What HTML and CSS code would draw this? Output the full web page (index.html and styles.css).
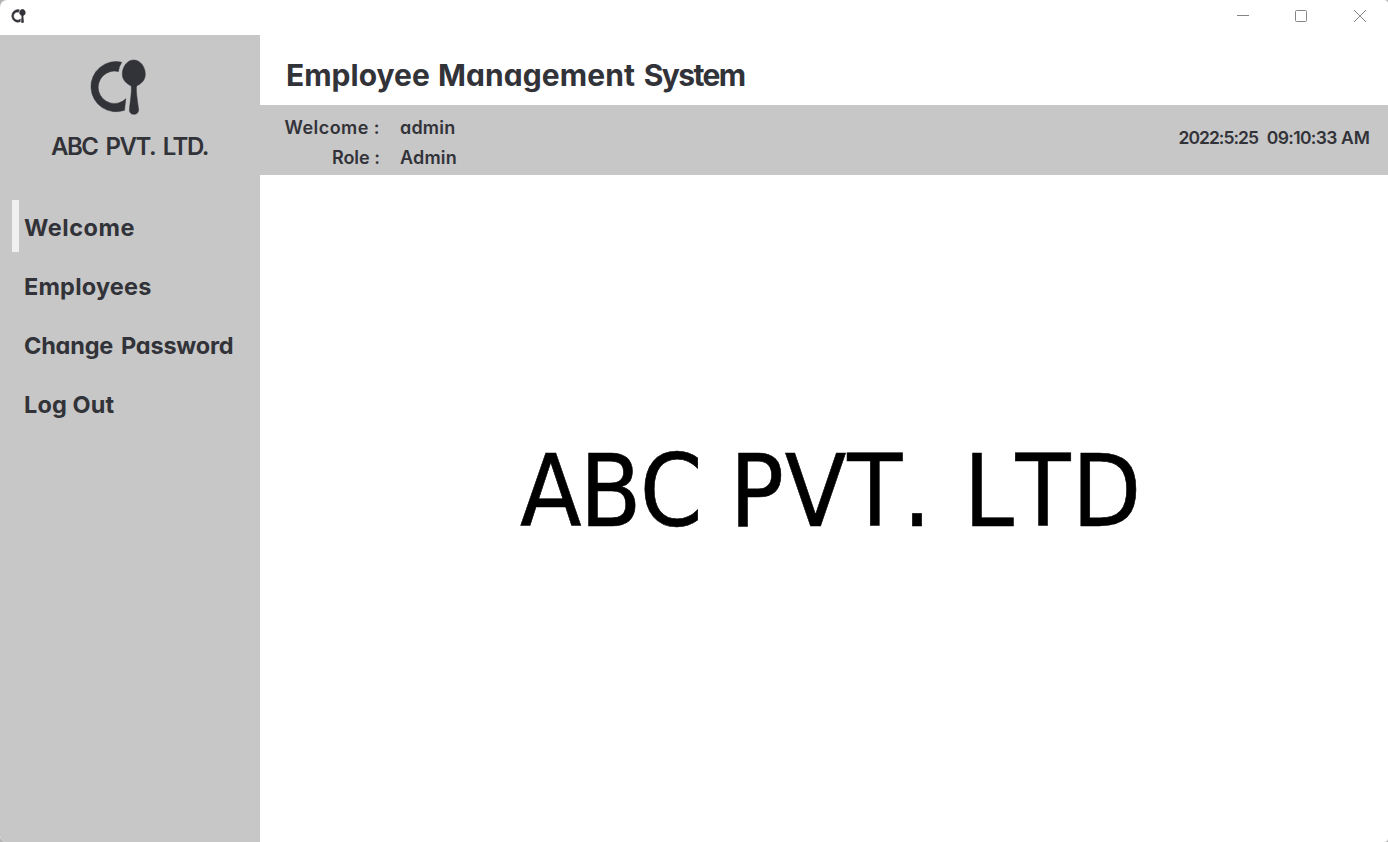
FILE: index.html
```html
<!DOCTYPE html>
<html lang="en">
<head>
<meta charset="utf-8">
<title>Employee Management System</title>
<link rel="stylesheet" href="styles.css">
</head>
<body>
<svg class="symbols" aria-hidden="true">
  <symbol id="logo" viewBox="0 0 56 56">
    <path d="M31.7 3.2A25.1 25.1 0 1 0 34.5 51.3L35.8 39.8A16.2 16.2 0 1 1 28.4 12.6Q29 7.4 31.7 3.2Z"/>
    <path d="M43.7 1C37.7 1 32.3 7.2 32.3 15.3C32.3 21 36.7 24.8 41.2 26.9C42 31 40.2 43 39.5 49.5C39 53.5 41 55.3 43.9 55.3C46.8 55.3 49 53.5 48.5 49.5C47.6 43 45.7 31 46.6 26.9C51.5 24.8 55.3 21 55.3 15.3C55.3 7.2 49.8 1 43.7 1Z"/>
  </symbol>
</svg>
<div class="window">
  <header class="titlebar">
    <svg class="app-icon"><use href="#logo"/></svg>
    <div class="controls">
      <svg class="control" viewBox="0 0 14 14"><path d="M1 6.5H13"/></svg>
      <svg class="control" viewBox="0 0 14 14"><rect x="1.5" y="1.5" width="11" height="11" rx="1"/></svg>
      <svg class="control" viewBox="0 0 14 14"><path d="M1 1L13 13M13 1L1 13"/></svg>
    </div>
  </header>
  <div class="layout">
    <aside class="sidebar">
      <svg class="logo"><use href="#logo"/></svg>
      <div class="company">ABC PVT. LTD.</div>
      <nav class="menu">
        <a class="item active"><span class="welcome">Welcome</span></a>
        <a class="item"><span class="employees">Employees</span></a>
        <a class="item"><span class="password">Change Password</span></a>
        <a class="item"><span class="logout">Log Out</span></a>
      </nav>
    </aside>
    <main class="main">
      <h1 class="heading"><span class="first">Employee</span> <span class="second">Management</span> <span class="third">System</span></h1>
      <section class="info">
        <dl class="user">
          <dt class="wide">Welcome :</dt><dd>admin</dd>
          <dt>Role :</dt><dd>Admin</dd>
        </dl>
        <div class="clock"><span class="date">2022:5:25</span>&nbsp; <span class="time">09:10:33</span> AM</div>
      </section>
      <section class="content"><div class="banner"><span class="abc">ABC</span> <span class="pvt">PVT.</span> <span class="ltd">LTD</span></div></section>
    </main>
  </div>
</div>
</body>
</html>
```
FILE: styles.css
```css
* { box-sizing: border-box; }
body { margin: 0; background: #b4b4b4; color: #323339; font-family: Inter, "Liberation Sans", sans-serif; font-weight: 650; font-feature-settings: "cv11", "calt" 0; }
.symbols { position: absolute; width: 0; height: 0; }
.window { width: 1388px; height: 842px; display: flex; flex-direction: column; background: #fff; border-radius: 7px 4px 4px 6px; overflow: hidden; }
.titlebar { height: 35px; flex: none; display: flex; justify-content: space-between; padding: 9px 21px 0 11px; }
.app-icon { width: 15px; height: 14px; fill: #323339; stroke: #323339; stroke-width: 2; }
.controls { display: grid; grid-template-columns: 58px 59px 14px; }
.control { width: 14px; height: 14px; fill: none; stroke: #858585; stroke-width: 1; }
.layout { flex: 1; display: flex; }
.sidebar { width: 260px; flex: none; background: #c7c7c7; display: flex; flex-direction: column; }
.logo { width: 56px; height: 56px; margin: 24px 0 0 90px; fill: #323339; stroke: #323339; stroke-width: .5; }
.company { height: 30px; line-height: 30px; margin: 17px 0 0 51px; font-size: 24px; font-weight: 600; letter-spacing: -1.5px; word-spacing: 3.5px; white-space: nowrap; }
.menu { display: flex; flex-direction: column; gap: 7px; margin-top: 38px; padding-left: 12px; }
.item { height: 52px; display: flex; align-items: center; padding: 2px 0 0 5px; border-left: 7px solid transparent; font-size: 23.5px; white-space: nowrap; }
.active { border-color: #f0f0f0; }
.welcome { letter-spacing: .55px; }
.employees { letter-spacing: .2px; }
.password { letter-spacing: -.2px; word-spacing: 2.5px; }
.logout { letter-spacing: .1px; }
.main { flex: 1; display: flex; flex-direction: column; }
.heading { height: 70px; margin: 0; padding: 10px 0 0 26px; line-height: 60px; font-size: 30px; font-weight: 650; white-space: nowrap; }
.second { letter-spacing: .1px; margin-left: 1px; }
.third { letter-spacing: -1.6px; margin-left: 1.5px; }
.info { height: 70px; background: #c7c7c7; display: flex; justify-content: space-between; padding: 8px 18px 0 24px; font-size: 18px; font-weight: 600; }
.user { display: grid; grid-template-columns: 96px auto; grid-auto-rows: 30px; column-gap: 20px; line-height: 30px; margin: 0; }
.user dt { text-align: right; }
.user dd { margin: 0; letter-spacing: .2px; }
.user .wide { letter-spacing: .45px; }
.clock { line-height: 50px; font-size: 17.5px; white-space: nowrap; }
.date { letter-spacing: -1px; }
.time { letter-spacing: -.65px; }
.content { flex: 1; padding: 259px 0 0 260px; }
.banner { font: 100px/116px "DejaVu Sans Condensed", "DejaVu Sans", sans-serif; font-kerning: none; -webkit-text-stroke: .6px #000; color: #000; white-space: nowrap; }
.abc { letter-spacing: -1.8px; }
.pvt { letter-spacing: .8px; margin-left: .5px; }
.ltd { letter-spacing: 1.6px; margin-left: 3px; }
```
